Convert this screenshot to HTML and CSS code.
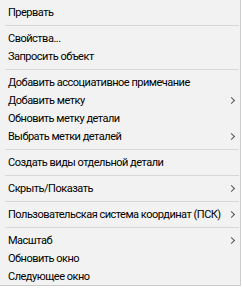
FILE: index.html
```html
<!DOCTYPE html>
<html>
<head>
<meta charset="utf-8">
<link rel="stylesheet" href="styles.css">
</head>
<body>
<div class="menu">
  <div class="item">Прервать</div>
  <div class="sep"></div>
  <div class="item">Свойства...</div>
  <div class="item">Запросить объект</div>
  <div class="sep"></div>
  <div class="item">Добавить ассоциативное примечание</div>
  <div class="item sub">Добавить метку</div>
  <div class="item">Обновить метку детали</div>
  <div class="item sub">Выбрать метки деталей</div>
  <div class="sep"></div>
  <div class="item">Создать виды отдельной детали</div>
  <div class="sep"></div>
  <div class="item sub">Скрыть/Показать</div>
  <div class="sep"></div>
  <div class="item sub">Пользовательская система координат (ПСК)</div>
  <div class="sep"></div>
  <div class="item sub">Масштаб</div>
  <div class="item">Обновить окно</div>
  <div class="item">Следующее окно</div>
</div>
</body>
</html>
```
FILE: styles.css
```css
html, body {
  margin: 0;
  padding: 0;
  background: #ffffff;
}
.menu {
  width: 240px;
  height: 282px;
  padding-top: 3px;
  background: #f2f2f2;
  border-right: 1px solid #cccccc;
  border-bottom: 1px solid #cccccc;
  font-family: Roboto, "Noto Sans", sans-serif;
  font-size: 11px;
  letter-spacing: -0.5px;
  color: #000000;
  display: flex;
  flex-direction: column;
}
.item {
  height: 17px;
  padding-top: 1px;
  line-height: 18px;
  padding-left: 8px;
  position: relative;
  white-space: nowrap;
}
.item.sub::after {
  content: "";
  position: absolute;
  right: 6px;
  top: 7px;
  width: 4px;
  height: 4px;
  border-top: 1px solid #555;
  border-right: 1px solid #555;
  transform: rotate(45deg);
}
.sep {
  height: 8px;
  display: flex;
  align-items: center;
  padding-left: 5px;
  padding-right: 1px;
}
.sep::before {
  content: "";
  flex: 1;
  height: 1px;
  background: #d7d7d7;
}
```
